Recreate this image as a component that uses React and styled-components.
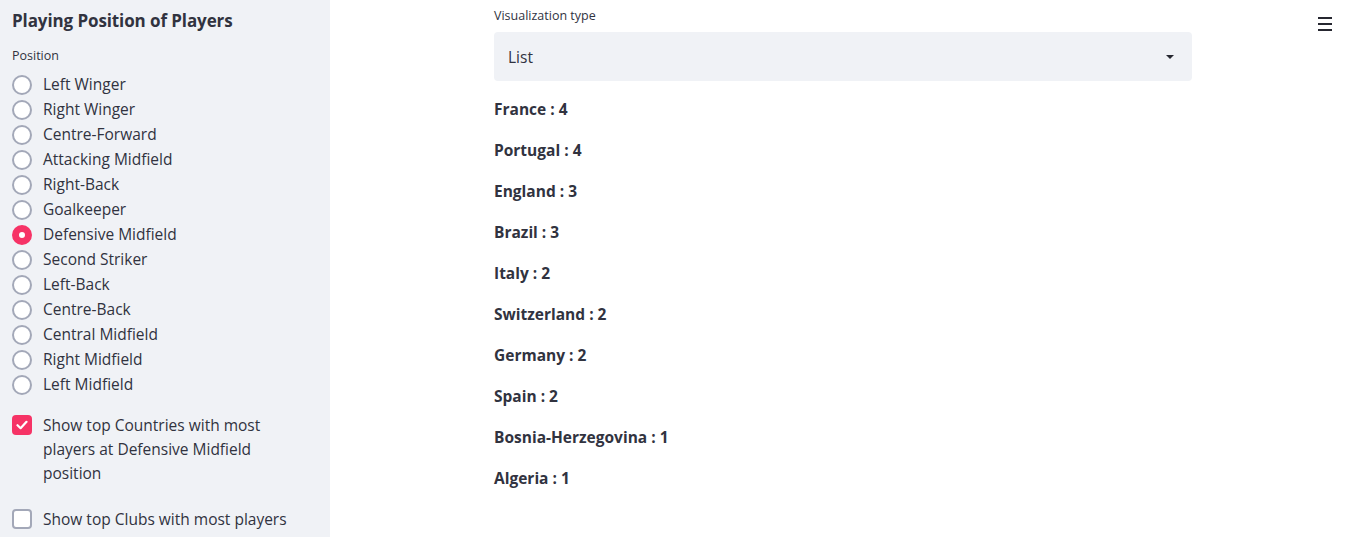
import styled, { createGlobalStyle } from 'styled-components';

const GlobalStyle = createGlobalStyle`
  html, body {
    margin: 0;
    height: 100%;
    overflow: hidden;
    background: #ffffff;
    font-family: "Open Sans", "Noto Sans", sans-serif;
    color: #31333f;
  }
  #root {
    height: 100%;
  }
  * {
    box-sizing: border-box;
  }
`;

const Layout = styled.div`
  display: flex;
  height: 100%;
`;

const Sidebar = styled.aside`
  width: 330px;
  flex-shrink: 0;
  background-color: #f0f2f6;
  padding: 9px 12px 0 12px;
`;

const Title = styled.h2`
  margin: 0 0 15px;
  font-size: 17px;
  font-weight: 700;
  line-height: 24px;
  letter-spacing: -0.1px;
`;

const WidgetLabel = styled.div`
  font-size: 12.5px;
  line-height: 16px;
  margin-bottom: 8px;
`;

const RadioGroup = styled.div`
  display: flex;
  flex-direction: column;
`;

const OptionRow = styled.label`
  display: flex;
  align-items: ${(p) => (p.top ? 'flex-start' : 'center')};
  gap: 11px;
  font-size: 15.5px;
  line-height: ${(p) => (p.top ? '24px' : '25px')};
  cursor: pointer;
`;

const RadioDot = styled.span`
  width: 20px;
  height: 20px;
  border-radius: 50%;
  flex-shrink: 0;
  border: ${(p) => (p.checked ? '7px solid #f63366' : '2px solid #a3a8b8')};
  background: #ffffff;
`;

const CheckBox = styled.span`
  width: 20px;
  height: 20px;
  margin-top: 2px;
  border-radius: 4px;
  flex-shrink: 0;
  display: flex;
  align-items: center;
  justify-content: center;
  border: ${(p) => (p.checked ? 'none' : '2px solid #a3a8b8')};
  background: ${(p) => (p.checked ? '#f63366' : '#ffffff')};
`;

const CheckGroup = styled.div`
  display: flex;
  flex-direction: column;
  gap: 22px;
  margin-top: 16px;
`;

const Main = styled.main`
  flex: 1;
  position: relative;
  padding: 7px 0 0 164px;
`;

const Content = styled.div`
  width: 698px;
`;

const SelectLabel = styled.div`
  font-size: 12.5px;
  line-height: 18px;
  margin-bottom: 7px;
`;

const SelectBox = styled.div`
  height: 49px;
  background: #f0f2f6;
  border-radius: 4px;
  display: flex;
  align-items: center;
  justify-content: space-between;
  padding: 0 18px 0 14px;
  font-size: 15.5px;
`;

const Caret = styled.span`
  width: 0;
  height: 0;
  border-left: 4px solid transparent;
  border-right: 4px solid transparent;
  border-top: 4px solid #262730;
`;

const CountryList = styled.div`
  display: flex;
  flex-direction: column;
  margin-top: 16px;
`;

const CountryRow = styled.p`
  margin: 0;
  font-size: 15.5px;
  font-weight: 700;
  line-height: 24px;
  margin-bottom: 17px;
`;

const MenuButton = styled.button`
  position: absolute;
  top: 14px;
  right: 8px;
  width: 24px;
  height: 20px;
  border: none;
  background: transparent;
  display: flex;
  flex-direction: column;
  align-items: center;
  justify-content: center;
  gap: 4px;
  padding: 0;
  & span {
    display: block;
    width: 14px;
    height: 2px;
    background: #262730;
  }
`;

const positions = [
  'Left Winger',
  'Right Winger',
  'Centre-Forward',
  'Attacking Midfield',
  'Right-Back',
  'Goalkeeper',
  'Defensive Midfield',
  'Second Striker',
  'Left-Back',
  'Centre-Back',
  'Central Midfield',
  'Right Midfield',
  'Left Midfield',
];

const countries = [
  ['France', 4],
  ['Portugal', 4],
  ['England', 3],
  ['Brazil', 3],
  ['Italy', 2],
  ['Switzerland', 2],
  ['Germany', 2],
  ['Spain', 2],
  ['Bosnia-Herzegovina', 1],
  ['Algeria', 1],
];

function CheckMark() {
  return (
    <svg width="12" height="10" viewBox="0 0 12 10">
      <path d="M1.5 5.2 L4.6 8.2 L10.5 1.8" fill="none" stroke="#fff" strokeWidth="2.2" strokeLinecap="round" strokeLinejoin="round" />
    </svg>
  );
}

export default function App() {
  const selected = 'Defensive Midfield';
  return (
    <Layout>
      <GlobalStyle />
      <Sidebar>
        <Title>Playing Position of Players</Title>
        <WidgetLabel>Position</WidgetLabel>
        <RadioGroup>
          {positions.map((pos) => (
            <OptionRow key={pos}>
              <RadioDot checked={pos === selected} />
              {pos}
            </OptionRow>
          ))}
        </RadioGroup>
        <CheckGroup>
          <OptionRow top>
            <CheckBox checked>
              <CheckMark />
            </CheckBox>
            <span>
              Show top Countries with most
              <br />
              players at Defensive Midfield
              <br />
              position
            </span>
          </OptionRow>
          <OptionRow top>
            <CheckBox />
            <span>Show top Clubs with most players</span>
          </OptionRow>
        </CheckGroup>
      </Sidebar>
      <Main>
        <Content>
          <SelectLabel>Visualization type</SelectLabel>
          <SelectBox>
            <span>List</span>
            <Caret />
          </SelectBox>
          <CountryList>
            {countries.map(([name, n]) => (
              <CountryRow key={name}>
                {name} : {n}
              </CountryRow>
            ))}
          </CountryList>
        </Content>
        <MenuButton aria-label="menu">
          <span />
          <span />
          <span />
        </MenuButton>
      </Main>
    </Layout>
  );
}
